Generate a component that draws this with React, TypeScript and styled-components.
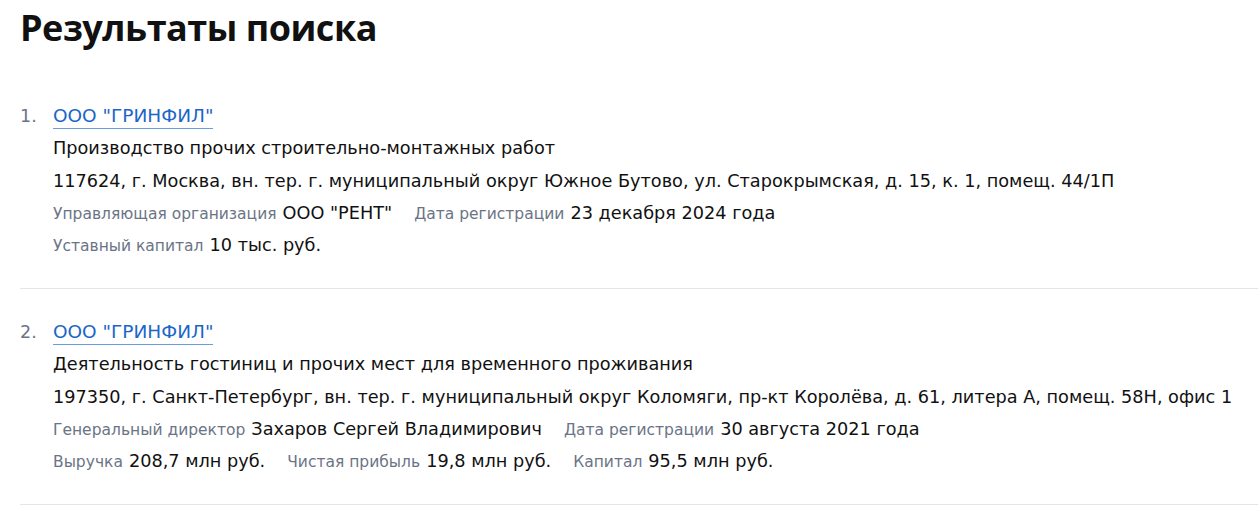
import styled, { createGlobalStyle } from 'styled-components';

const GlobalStyle = createGlobalStyle`
  body {
    margin: 0;
    background: #ffffff;
    font-family: 'DejaVu Sans', 'Open Sans', Arial, sans-serif;
    color: #111111;
  }
`;

type Field = { label: string; value: string };

type Company = {
  name: string;
  activity: string;
  address: string;
  rows: Field[][];
};

const companies: Company[] = [
  {
    name: 'ООО "ГРИНФИЛ"',
    activity: 'Производство прочих строительно-монтажных работ',
    address:
      '117624, г. Москва, вн. тер. г. муниципальный округ Южное Бутово, ул. Старокрымская, д. 15, к. 1, помещ. 44/1П',
    rows: [
      [
        { label: 'Управляющая организация', value: 'ООО "РЕНТ"' },
        { label: 'Дата регистрации', value: '23 декабря 2024 года' },
      ],
      [{ label: 'Уставный капитал', value: '10 тыс. руб.' }],
    ],
  },
  {
    name: 'ООО "ГРИНФИЛ"',
    activity: 'Деятельность гостиниц и прочих мест для временного проживания',
    address:
      '197350, г. Санкт-Петербург, вн. тер. г. муниципальный округ Коломяги, пр-кт Королёва, д. 61, литера А, помещ. 58Н, офис 1',
    rows: [
      [
        { label: 'Генеральный директор', value: 'Захаров Сергей Владимирович' },
        { label: 'Дата регистрации', value: '30 августа 2021 года' },
      ],
      [
        { label: 'Выручка', value: '208,7 млн руб.' },
        { label: 'Чистая прибыль', value: '19,8 млн руб.' },
        { label: 'Капитал', value: '95,5 млн руб.' },
      ],
    ],
  },
];

const Page = styled.main`
  padding: 0 0 0 20px;
`;

const Title = styled.h1`
  margin: 0;
  padding-top: 4px;
  font-family: 'Open Sans', 'Noto Sans', Arial, sans-serif;
  font-size: 36px;
  line-height: 48px;
  font-weight: 700;
  letter-spacing: -0.5px;
  color: #111111;
`;

const ResultList = styled.ol`
  list-style: none;
  margin: 21px 0 0;
  padding: 0;
`;

const Item = styled.li`
  display: flex;
  padding: 27px 0 26px;
  border-bottom: 1px solid #e3e5ea;
`;

const Index = styled.span`
  width: 33px;
  flex-shrink: 0;
  font-size: 17.5px;
  line-height: 32px;
  color: #6b7486;
`;

const Body = styled.div`
  display: flex;
  flex-direction: column;
`;

const NameLink = styled.a`
  align-self: flex-start;
  font-size: 18.5px;
  line-height: 24px;
  margin: 4px 0 3px;
  color: #1b66c9;
  text-decoration: none;
  border-bottom: 1px solid #6a9de0;
`;

const Line = styled.div`
  font-size: 17.7px;
  line-height: 32.5px;
  color: #111111;
  white-space: nowrap;
`;

const FieldRow = styled.div`
  display: flex;
  align-items: center;
  gap: 22px;
  height: 32.5px;
  white-space: nowrap;
`;

const FieldItem = styled.span`
  display: flex;
  align-items: baseline;
  font-size: 17.7px;
  line-height: 1.2;
  color: #111111;
`;

const Label = styled.span`
  font-size: 15.5px;
  color: #6b7486;
  margin-right: 6px;
`;

export default function App() {
  return (
    <>
      <GlobalStyle />
      <Page>
        <Title>Результаты поиска</Title>
        <ResultList>
          {companies.map((c, i) => (
            <Item key={i}>
              <Index>{i + 1}.</Index>
              <Body>
                <NameLink href="#">{c.name}</NameLink>
                <Line>{c.activity}</Line>
                <Line>{c.address}</Line>
                {c.rows.map((row, r) => (
                  <FieldRow key={r}>
                    {row.map((f) => (
                      <FieldItem key={f.label}>
                        <Label>{f.label}</Label>
                        {f.value}
                      </FieldItem>
                    ))}
                  </FieldRow>
                ))}
              </Body>
            </Item>
          ))}
        </ResultList>
      </Page>
    </>
  );
}
